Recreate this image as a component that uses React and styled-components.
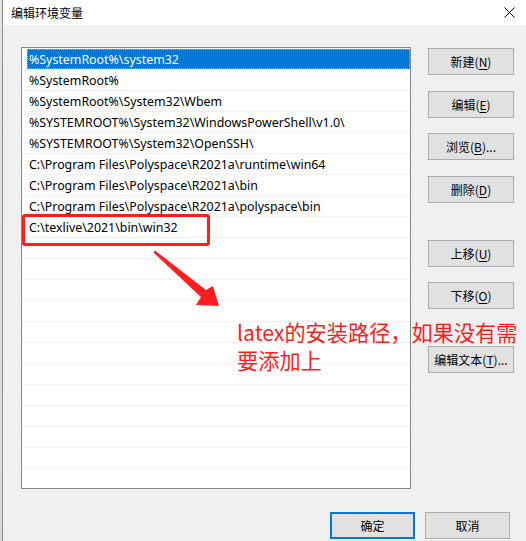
import React from "react";
import styled, { createGlobalStyle } from "styled-components";

const GlobalStyle = createGlobalStyle`
  html, body { margin: 0; padding: 0; background: #f0f0f0; }
  body {
    font-family: "Noto Sans", "Noto Sans CJK SC", sans-serif;
    font-size: 12px;
    color: #000;
  }
`;

const Screen = styled.div`
  position: relative;
  width: 526px;
  height: 541px;
  display: flex;
  overflow: hidden;
`;

const BackStrip = styled.div`
  width: 2px;
  background: linear-gradient(#e6e6e6, #d8d8d8);
  border-right: 1px solid #8a8a8a;
`;

const Dialog = styled.div`
  flex: 1;
  display: flex;
  flex-direction: column;
  background: #f0f0f0;
`;

const TitleBar = styled.div`
  height: 25px;
  background: #fff;
  display: flex;
  align-items: center;
  justify-content: space-between;
  padding: 0 11px 1px 8px;
  box-sizing: border-box;
  font-family: "Noto Sans CJK SC", sans-serif;
  font-size: 12px;
`;

const Body = styled.div`
  flex: 1;
  display: flex;
  flex-direction: column;
  padding: 22px 0 0 18px;
`;

const MainRow = styled.div`
  display: flex;
  align-items: flex-start;
`;

const ListBox = styled.div`
  width: 388px;
  height: 439px;
  border: 1px solid #828790;
  background: #fff;
  padding-top: 1px;
  display: flex;
  flex-direction: column;
  overflow: hidden;
`;

const Row = styled.div`
  height: 20px;
  border-bottom: 1px solid #f0f0f0;
  display: flex;
`;

const RowLabel = styled.div`
  flex: 1;
  margin-left: 5px;
  padding-left: 2px;
  line-height: 21px;
  font-family: "Noto Sans", "Noto Sans CJK SC", sans-serif;
  font-size: 12.4px;
  white-space: nowrap;
  color: ${(p) => (p.$selected ? "#fff" : "#000")};
  background: ${(p) => (p.$selected ? "#0078d7" : "transparent")};
  outline: ${(p) => (p.$selected ? "1px dotted #f5a85a" : "none")};
  outline-offset: -1px;
`;

const ButtonColumn = styled.div`
  display: flex;
  flex-direction: column;
  margin-left: 17px;
`;

const Button = styled.div`
  box-sizing: border-box;
  width: ${(p) => p.$w || 86}px;
  height: 27px;
  margin-top: ${(p) => p.$mt || 0}px;
  background: #e1e1e1;
  border: ${(p) => (p.$default ? "2px solid #0078d7" : "1px solid #adadad")};
  display: flex;
  align-items: center;
  justify-content: center;
  font-family: "Noto Sans CJK SC", sans-serif;
  font-size: 12px;
  color: #000;
  u { text-decoration: underline; text-underline-offset: 2px; }
`;

const Footer = styled.div`
  display: flex;
  justify-content: flex-end;
  gap: 10px;
  margin-top: 23px;
  padding-right: 16px;
`;

const HighlightBox = styled.div`
  position: absolute;
  left: 22px;
  top: 214px;
  width: 182px;
  height: 26px;
  border: 3px solid #ff1e1e;
  border-radius: 3px;
  pointer-events: none;
`;

const Overlay = styled.svg`
  position: absolute;
  left: 0;
  top: 0;
  pointer-events: none;
`;

const Note = styled.div`
  position: absolute;
  left: 237px;
  top: 318px;
  font-family: "Noto Sans CJK SC", sans-serif;
  font-size: 21.2px;
  line-height: 28px;
  color: #ff1e1e;
  white-space: nowrap;
`;

const NoteLine = styled.div``;

const paths = [
  "%SystemRoot%\\system32",
  "%SystemRoot%",
  "%SystemRoot%\\System32\\Wbem",
  "%SYSTEMROOT%\\System32\\WindowsPowerShell\\v1.0\\",
  "%SYSTEMROOT%\\System32\\OpenSSH\\",
  "C:\\Program Files\\Polyspace\\R2021a\\runtime\\win64",
  "C:\\Program Files\\Polyspace\\R2021a\\bin",
  "C:\\Program Files\\Polyspace\\R2021a\\polyspace\\bin",
  "C:\\texlive\\2021\\bin\\win32",
];

const rows = [...paths, ...Array(11).fill("")];

const CloseIcon = () => (
  <svg width="11" height="11" viewBox="0 0 11 11">
    <path d="M0.5 0.5 L10.5 10.5 M10.5 0.5 L0.5 10.5" stroke="#000" strokeWidth="1" fill="none" />
  </svg>
);

export default function App() {
  return (
    <>
      <GlobalStyle />
      <Screen>
        <BackStrip />
        <Dialog>
          <TitleBar>
            <span>编辑环境变量</span>
            <CloseIcon />
          </TitleBar>
          <Body>
            <MainRow>
              <ListBox>
                {rows.map((r, i) => (
                  <Row key={i}>
                    <RowLabel $selected={i === 0}>{r}</RowLabel>
                  </Row>
                ))}
              </ListBox>
              <ButtonColumn>
                <Button $mt={1}>新建(<u>N</u>)</Button>
                <Button $mt={16}>编辑(<u>E</u>)</Button>
                <Button $mt={15}>浏览(<u>B</u>)...</Button>
                <Button $mt={16}>删除(<u>D</u>)</Button>
                <Button $mt={37}>上移(<u>U</u>)</Button>
                <Button $mt={15}>下移(<u>O</u>)</Button>
                <Button $mt={37}>编辑文本(<u>T</u>)...</Button>
              </ButtonColumn>
            </MainRow>
            <Footer>
              <Button $w={85} $default>确定</Button>
              <Button $w={85}>取消</Button>
            </Footer>
          </Body>
        </Dialog>
        <HighlightBox />
        <Overlay width="526" height="541" viewBox="0 0 526 541">
          <polygon
            points="155,250.5 206,290 213,286 219,306 196,305 201,297 153.5,252.5"
            fill="#ff1e1e"
          />
        </Overlay>
        <Note>
          <NoteLine>latex的安装路径，如果没有需</NoteLine>
          <NoteLine>要添加上</NoteLine>
        </Note>
      </Screen>
    </>
  );
}
